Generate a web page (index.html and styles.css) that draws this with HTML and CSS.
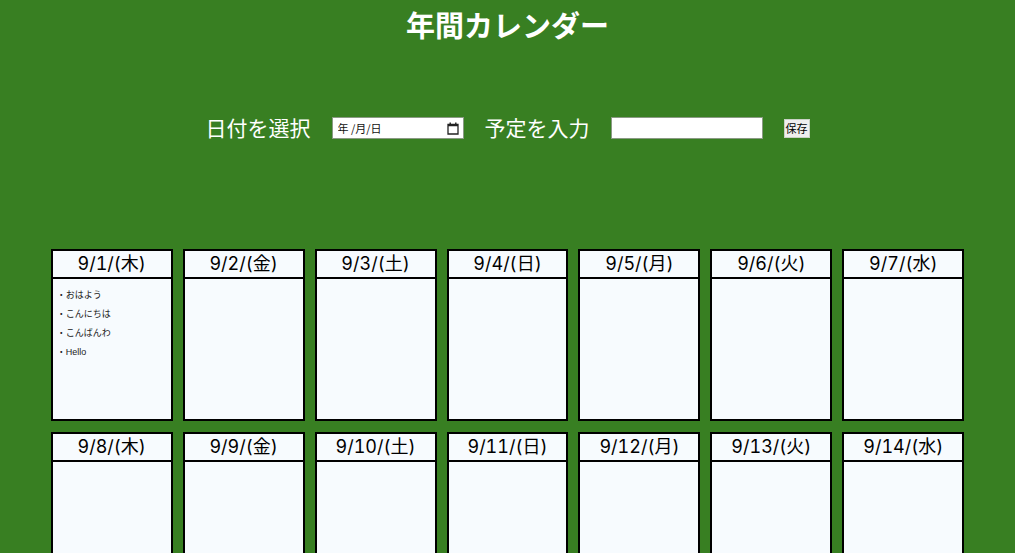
FILE: index.html
```html
<!DOCTYPE html>
<html lang="ja">
<head>
<meta charset="utf-8">
<meta name="viewport" content="width=device-width, initial-scale=1">
<title>年間カレンダー</title>
<link rel="stylesheet" href="styles.css">
</head>
<body>
<h1 class="title">年間カレンダー</h1>
<form class="entry-form">
  <label class="entry-label" for="date">日付を選択</label>
  <div class="date-field">
    <input class="date-input" id="date" type="text" placeholder="年 /月/日">
    <button class="date-picker" type="button" aria-label="カレンダーを開く">
      <svg class="date-icon" viewBox="0 0 12 13" aria-hidden="true"><path d="M1 2.5h10v9.5H1z" fill="none" stroke="#222" stroke-width="1.3"/><path d="M1 2h10v2.2H1zM2.5.5h1.4V2H2.5zM8.1.5h1.4V2H8.1z" fill="#222"/></svg>
    </button>
  </div>
  <label class="entry-label" for="plan">予定を入力</label>
  <input class="plan-input" id="plan" type="text">
  <button class="save" type="button">保存</button>
</form>
<main class="calendar">
  <section class="day"><h2 class="day-name">9/1/(木)</h2>
    <ul class="plans"><li>・おはよう</li><li>・こんにちは</li><li>・こんばんわ</li><li>・Hello</li></ul>
  </section>
  <section class="day"><h2 class="day-name">9/2/(金)</h2></section>
  <section class="day"><h2 class="day-name">9/3/(土)</h2></section>
  <section class="day"><h2 class="day-name">9/4/(日)</h2></section>
  <section class="day"><h2 class="day-name">9/5/(月)</h2></section>
  <section class="day"><h2 class="day-name">9/6/(火)</h2></section>
  <section class="day"><h2 class="day-name">9/7/(水)</h2></section>
  <section class="day"><h2 class="day-name">9/8/(木)</h2></section>
  <section class="day"><h2 class="day-name">9/9/(金)</h2></section>
  <section class="day"><h2 class="day-name">9/10/(土)</h2></section>
  <section class="day"><h2 class="day-name">9/11/(日)</h2></section>
  <section class="day"><h2 class="day-name">9/12/(月)</h2></section>
  <section class="day"><h2 class="day-name">9/13/(火)</h2></section>
  <section class="day"><h2 class="day-name">9/14/(水)</h2></section>
</main>
</body>
</html>
```

FILE: styles.css
```css
* {
  box-sizing: border-box;
}

html {
  scrollbar-width: none;
}

body {
  margin: 0;
  background: #387f22;
  color: #000;
  font-family: "Noto Sans CJK JP", sans-serif;
}

.title {
  margin: 0;
  padding-top: 4px;
  color: #fff;
  font-size: 29px;
  line-height: 40px;
  text-align: center;
}

.entry-form {
  display: flex;
  justify-content: center;
  align-items: center;
  gap: 21px;
  margin: 69px 0 106px;
}

.entry-label {
  padding-bottom: 2px;
  color: #fff;
  font-size: 21px;
  line-height: 28px;
}

.date-field {
  display: flex;
  align-items: center;
  width: 132px;
  height: 22px;
  padding: 0 4px 0 5px;
  border: 1px solid #8a9a84;
  background: #fff;
}

.date-input {
  flex: 1;
  min-width: 0;
  padding: 0;
  border: 0;
  background: none;
  font: 11px "Noto Sans CJK JP", sans-serif;
}

.date-input::placeholder {
  color: #111;
}

.date-picker {
  display: flex;
  padding: 0;
  border: 0;
  background: none;
}

.date-icon {
  width: 12px;
  height: 13px;
}

.plan-input {
  width: 152px;
  height: 22px;
  padding: 0 5px;
  border: 1px solid #8a9a84;
  background: #fff;
  font: 11px "Noto Sans CJK JP", sans-serif;
}

.save {
  padding: 0 1px;
  border: 1px solid #c9d2c5;
  background: #efefef;
  color: #000;
  font: 11px/17px "Noto Sans CJK JP", sans-serif;
}

.calendar {
  display: grid;
  grid-template-columns: repeat(7, 1fr);
  gap: 11px 10px;
  width: 90%;
  margin: 0 auto;
}

.day {
  min-height: 172px;
  border: 2px solid #000;
  background: #f7fbfe;
}

.day-name {
  margin: 0;
  border-bottom: 2px solid #000;
  font-family: Inter, "Noto Sans CJK JP", sans-serif;
  font-size: 18px;
  font-variant-numeric: tabular-nums;
  font-weight: 400;
  line-height: 26px;
  text-align: center;
}

.plans {
  display: grid;
  gap: 5px;
  margin: 0;
  padding: 9px 4px;
  list-style: none;
  color: #222;
  font-family: "Liberation Sans", "Noto Sans CJK JP", sans-serif;
  font-size: 9px;
  line-height: 14px;
}
```
